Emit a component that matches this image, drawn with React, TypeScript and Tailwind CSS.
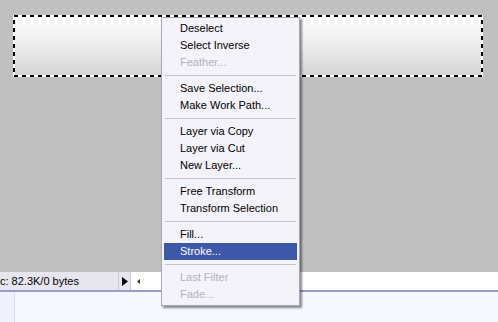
import React from "react";

type Item = { label: string; disabled?: boolean; active?: boolean } | "sep";

const items: Item[] = [
  { label: "Deselect" },
  { label: "Select Inverse" },
  { label: "Feather...", disabled: true },
  "sep",
  { label: "Save Selection..." },
  { label: "Make Work Path..." },
  "sep",
  { label: "Layer via Copy" },
  { label: "Layer via Cut" },
  { label: "New Layer..." },
  "sep",
  { label: "Free Transform" },
  { label: "Transform Selection" },
  "sep",
  { label: "Fill..." },
  { label: "Stroke...", active: true },
  "sep",
  { label: "Last Filter", disabled: true },
  { label: "Fade...", disabled: true },
];

function ContextMenu() {
  return (
    <div className="absolute left-[161px] top-[17px] w-[139px] border border-[#a7a6b4] bg-[#f4f3f9] py-[2px] shadow-[2px_2px_2px_rgba(0,0,0,0.45)]">
      {items.map((item, i) =>
        item === "sep" ? (
          <div key={i} className="flex h-[9px] items-center px-[3px]">
            <div className="h-px w-full bg-[#c5c3d3]" />
          </div>
        ) : (
          <div
            key={i}
            className={`mx-[2px] flex h-[17px] items-center pl-[16px] text-[11px] leading-none ${
              item.active
                ? "bg-[#3d58a8] text-white"
                : item.disabled
                ? "text-[#b3b1c0]"
                : "text-black"
            }`}
          >
            {item.label}
          </div>
        )
      )}
    </div>
  );
}

export default function App() {
  return (
    <div
      className="relative flex h-[322px] w-[498px] flex-col overflow-hidden"
      style={{ fontFamily: '"Liberation Sans", Arial, sans-serif' }}
    >
      {/* canvas */}
      <div className="h-[272px] bg-[#c0c0c0] pl-[13px] pt-[15px]">
        <div className="relative h-[62px] w-[470px] bg-gradient-to-b from-[#fefefe] via-[#ececec] to-[#d3d3d3]">
          <svg className="absolute inset-0" width="470" height="62">
            <rect x="1" y="1" width="468" height="60" fill="none" stroke="#fff" strokeWidth="2" />
            <rect x="1" y="1" width="468" height="60" fill="none" stroke="#000" strokeWidth="2" strokeDasharray="4 4" />
          </svg>
        </div>
      </div>

      {/* status bar */}
      <div className="flex h-[18px] items-stretch bg-white">
        <div className="flex w-[118px] items-center bg-[#e7e6ef] text-[11px] text-black">
          c: 82.3K/0 bytes
        </div>
        <div className="flex w-[13px] items-center justify-center border-x border-[#c9c8d4] bg-[#e7e6ef]">
          <svg width="6" height="9" viewBox="0 0 6 9">
            <path d="M0 0L6 4.5L0 9Z" fill="#000" />
          </svg>
        </div>
        <div className="flex items-center pl-[6px]">
          <svg width="3" height="5" viewBox="0 0 3 5">
            <path d="M3 0L0 2.5L3 5Z" fill="#333" />
          </svg>
        </div>
      </div>
      <div className="h-[2px] bg-[#9d9cc8]" />

      {/* lower panel */}
      <div className="flex flex-1 bg-[#f5f8fe]">
        <div className="w-[15px] border-r border-[#d9dee9] bg-[#eef3fb]" />
      </div>

      <ContextMenu />
    </div>
  );
}
